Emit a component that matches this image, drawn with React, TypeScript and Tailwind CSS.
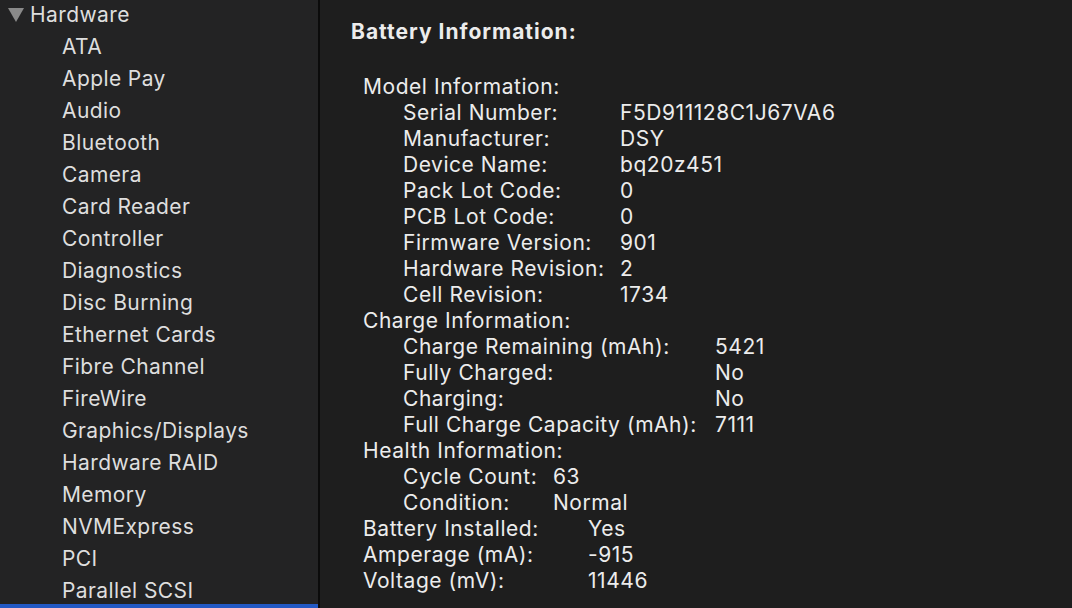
const SIDEBAR = [
  "ATA",
  "Apple Pay",
  "Audio",
  "Bluetooth",
  "Camera",
  "Card Reader",
  "Controller",
  "Diagnostics",
  "Disc Burning",
  "Ethernet Cards",
  "Fibre Channel",
  "FireWire",
  "Graphics/Displays",
  "Hardware RAID",
  "Memory",
  "NVMExpress",
  "PCI",
  "Parallel SCSI",
];

type Row = [string, string];

const MODEL: Row[] = [
  ["Serial Number:", "F5D911128C1J67VA6"],
  ["Manufacturer:", "DSY"],
  ["Device Name:", "bq20z451"],
  ["Pack Lot Code:", "0"],
  ["PCB Lot Code:", "0"],
  ["Firmware Version:", "901"],
  ["Hardware Revision:", "2"],
  ["Cell Revision:", "1734"],
];

const CHARGE: Row[] = [
  ["Charge Remaining (mAh):", "5421"],
  ["Fully Charged:", "No"],
  ["Charging:", "No"],
  ["Full Charge Capacity (mAh):", "7111"],
];

const HEALTH: Row[] = [
  ["Cycle Count:", "63"],
  ["Condition:", "Normal"],
];

const TOP: Row[] = [
  ["Battery Installed:", "Yes"],
  ["Amperage (mA):", "-915"],
  ["Voltage (mV):", "11446"],
];

const Group = ({ rows, col, className }: { rows: Row[]; col: string; className: string }) => (
  <div className={className}>
    {rows.map(([k, v]) => (
      <div key={k} className="flex h-[26px] items-center whitespace-nowrap">
        <div className={col}>{k}</div>
        <div>{v}</div>
      </div>
    ))}
  </div>
);

export default function App() {
  return (
    <div
      className="flex h-[608px] w-[1072px] overflow-hidden bg-[#1e1e1e] text-[21px] tracking-[0.4px]"
      style={{ fontFamily: "Inter, 'Liberation Sans', sans-serif" }}
    >
      <div className="flex w-[318px] shrink-0 flex-col bg-[#232324] text-[#dedede]">
        <div className="-mt-[1px] flex h-8 shrink-0 items-center">
          <svg width="16" height="14" viewBox="0 0 16 14" className="ml-[8px] mr-[6px]">
            <path d="M0 0 H16 L8 14 Z" fill="#8a8a8a" />
          </svg>
          <span>Hardware</span>
        </div>
        {SIDEBAR.map((s) => (
          <div key={s} className="flex h-8 shrink-0 items-center whitespace-nowrap pl-[62px]">
            {s}
          </div>
        ))}
        {/* selected row, scrolled mostly out of view */}
        <div className="-mt-[3px] h-8 shrink-0 bg-[#2359c4]" />
      </div>
      <div className="w-[2px] shrink-0 bg-[#0b0b0b]" />
      <div className="flex-1 pl-[31px] pt-[18px] text-[#ececec] tracking-[0.55px]">
        <div className="flex h-7 items-center font-bold tracking-[1px]">Battery Information:</div>
        <div className="mt-[28px] pl-[12px]">
          <div className="flex h-[26px] items-center">Model Information:</div>
          <Group rows={MODEL} col="w-[217px]" className="pl-[40px]" />
          <div className="flex h-[26px] items-center">Charge Information:</div>
          <Group rows={CHARGE} col="w-[312px]" className="pl-[40px]" />
          <div className="flex h-[26px] items-center">Health Information:</div>
          <Group rows={HEALTH} col="w-[150px]" className="pl-[40px]" />
          <Group rows={TOP} col="w-[225px]" className="" />
        </div>
      </div>
    </div>
  );
}
